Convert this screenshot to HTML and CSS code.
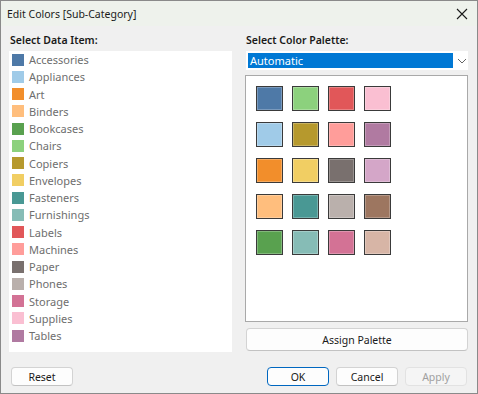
FILE: index.html
```html
<!DOCTYPE html>
<html>
<head>
<meta charset="utf-8">
<link rel="stylesheet" href="styles.css">
</head>
<body>
<div class="window">
  <div class="titlebar">
    <span class="title">Edit Colors [Sub-Category]</span>
    <svg class="close" width="12" height="12" viewBox="0 0 12 12"><path d="M1 1 L11 11 M11 1 L1 11" stroke="#1a1a1a" stroke-width="1.1" fill="none"/></svg>
  </div>
  <div class="content">
    <div class="col">
      <div class="label">Select Data Item:</div>
      <div class="list">
        <div class="item"><span class="sw" style="background:#4e79a7"></span>Accessories</div>
        <div class="item"><span class="sw" style="background:#a0cbe8"></span>Appliances</div>
        <div class="item"><span class="sw" style="background:#f28e2b"></span>Art</div>
        <div class="item"><span class="sw" style="background:#ffbe7d"></span>Binders</div>
        <div class="item"><span class="sw" style="background:#59a14f"></span>Bookcases</div>
        <div class="item"><span class="sw" style="background:#8cd17d"></span>Chairs</div>
        <div class="item"><span class="sw" style="background:#b6992d"></span>Copiers</div>
        <div class="item"><span class="sw" style="background:#f1ce63"></span>Envelopes</div>
        <div class="item"><span class="sw" style="background:#499894"></span>Fasteners</div>
        <div class="item"><span class="sw" style="background:#86bcb6"></span>Furnishings</div>
        <div class="item"><span class="sw" style="background:#e15759"></span>Labels</div>
        <div class="item"><span class="sw" style="background:#ff9d9a"></span>Machines</div>
        <div class="item"><span class="sw" style="background:#79706e"></span>Paper</div>
        <div class="item"><span class="sw" style="background:#bab0ac"></span>Phones</div>
        <div class="item"><span class="sw" style="background:#d37295"></span>Storage</div>
        <div class="item"><span class="sw" style="background:#fabfd2"></span>Supplies</div>
        <div class="item"><span class="sw" style="background:#b07aa1"></span>Tables</div>
      </div>
    </div>
    <div class="col">
      <div class="label">Select Color Palette:</div>
      <div class="select">
        <div class="selected">Automatic</div>
        <svg class="chev" width="10" height="6" viewBox="0 0 10 6"><path d="M1 1 L5 5 L9 1" stroke="#666" stroke-width="1" fill="none"/></svg>
      </div>
      <div class="palette">
        <div class="grid">
          <span class="ps" style="background:#4e79a7"></span>
          <span class="ps" style="background:#a0cbe8"></span>
          <span class="ps" style="background:#f28e2b"></span>
          <span class="ps" style="background:#ffbe7d"></span>
          <span class="ps" style="background:#59a14f"></span>
          <span class="ps" style="background:#8cd17d"></span>
          <span class="ps" style="background:#b6992d"></span>
          <span class="ps" style="background:#f1ce63"></span>
          <span class="ps" style="background:#499894"></span>
          <span class="ps" style="background:#86bcb6"></span>
          <span class="ps" style="background:#e15759"></span>
          <span class="ps" style="background:#ff9d9a"></span>
          <span class="ps" style="background:#79706e"></span>
          <span class="ps" style="background:#bab0ac"></span>
          <span class="ps" style="background:#d37295"></span>
          <span class="ps" style="background:#fabfd2"></span>
          <span class="ps" style="background:#b07aa1"></span>
          <span class="ps" style="background:#d4a6c8"></span>
          <span class="ps" style="background:#9d7660"></span>
          <span class="ps" style="background:#d7b5a6"></span>
        </div>
      </div>
      <button class="btn assign">Assign Palette</button>
    </div>
  </div>
  <div class="footer">
    <button class="btn small">Reset</button>
    <div class="right">
      <button class="btn small ok">OK</button>
      <button class="btn small">Cancel</button>
      <button class="btn small disabled">Apply</button>
    </div>
  </div>
</div>
</body>
</html>
```
FILE: styles.css
```css
html, body {
  margin: 0;
  padding: 0;
}
body {
  width: 478px;
  height: 394px;
  font-family: "Noto Sans", "Liberation Sans", sans-serif;
  font-size: 11.5px;
  color: #1a1a1a;
  background: #f0f0f0;
}
.window {
  box-sizing: border-box;
  width: 478px;
  height: 394px;
  border: 1px solid #8a8a8a;
  background: #f0f0f0;
  display: flex;
  flex-direction: column;
}
.titlebar {
  height: 25px;
  background: #eef2ec;
  display: flex;
  align-items: center;
  justify-content: space-between;
  padding: 0 9px 0 6px;
  flex-shrink: 0;
}
.title {
  font-size: 10.5px;
  color: #1a1a1a;
}
.close {
  display: block;
}
.content {
  display: grid;
  grid-template-columns: 223px 223px;
  column-gap: 13px;
  padding: 6px 0 0 8px;
}
.col {
  display: flex;
  flex-direction: column;
}
.label {
  font-weight: 600;
  font-size: 10.5px;
  height: 19px;
  line-height: 17px;
  padding-left: 1px;
}
.list {
  background: #ffffff;
  height: 301px;
  box-sizing: border-box;
  padding: 0 0 0 3px;
}
.item {
  height: 17.25px;
  display: flex;
  align-items: center;
  color: #6e6e6e;
  font-size: 11px;
}
.sw {
  width: 12px;
  height: 12px;
  margin-right: 5px;
  flex-shrink: 0;
}
.select {
  height: 19px;
  background: #ffffff;
  display: flex;
  align-items: center;
  box-sizing: border-box;
  padding: 1px 0 1px 2px;
  margin-left: 1px;
}
.selected {
  width: 205px;
  height: 15px;
  background: #0078d4;
  color: #ffffff;
  line-height: 15px;
  padding-left: 2px;
  box-sizing: border-box;
  font-size: 11px;
}
.chev {
  margin-left: 4px;
}
.palette {
  margin-top: 5px;
  height: 247px;
  box-sizing: border-box;
  border: 1px solid #a9a9a9;
  background: #ffffff;
  padding: 10px 0 0 10px;
}
.grid {
  display: grid;
  grid-template-columns: repeat(4, 27px);
  grid-template-rows: repeat(5, 25px);
  grid-auto-flow: column;
  column-gap: 9px;
  row-gap: 11px;
}
.ps {
  box-sizing: border-box;
  border: 1px solid #3a3a3a;
  box-shadow: inset 0 0 0 1px rgba(255,255,255,0.25);
}
.btn {
  font-family: inherit;
  font-size: 10.5px;
  color: #1a1a1a;
  background: #fdfdfd;
  border: 1px solid #d3d3d3;
  border-bottom-color: #c2c2c2;
  border-radius: 4px;
  padding: 0;
  box-sizing: border-box;
}
.assign {
  margin-top: 6px;
  margin-left: 1px;
  width: 222px;
  height: 23px;
}
.footer {
  display: flex;
  justify-content: space-between;
  padding: 15px 10px 0 10px;
}
.right {
  display: flex;
  gap: 7px;
}
.small {
  width: 62px;
  height: 19px;
}
.ok {
  border: 1px solid #0067c0;
}
.disabled {
  color: #a0a0a0;
  background: #f5f5f5;
  border-color: #e2e2e2;
}
```
